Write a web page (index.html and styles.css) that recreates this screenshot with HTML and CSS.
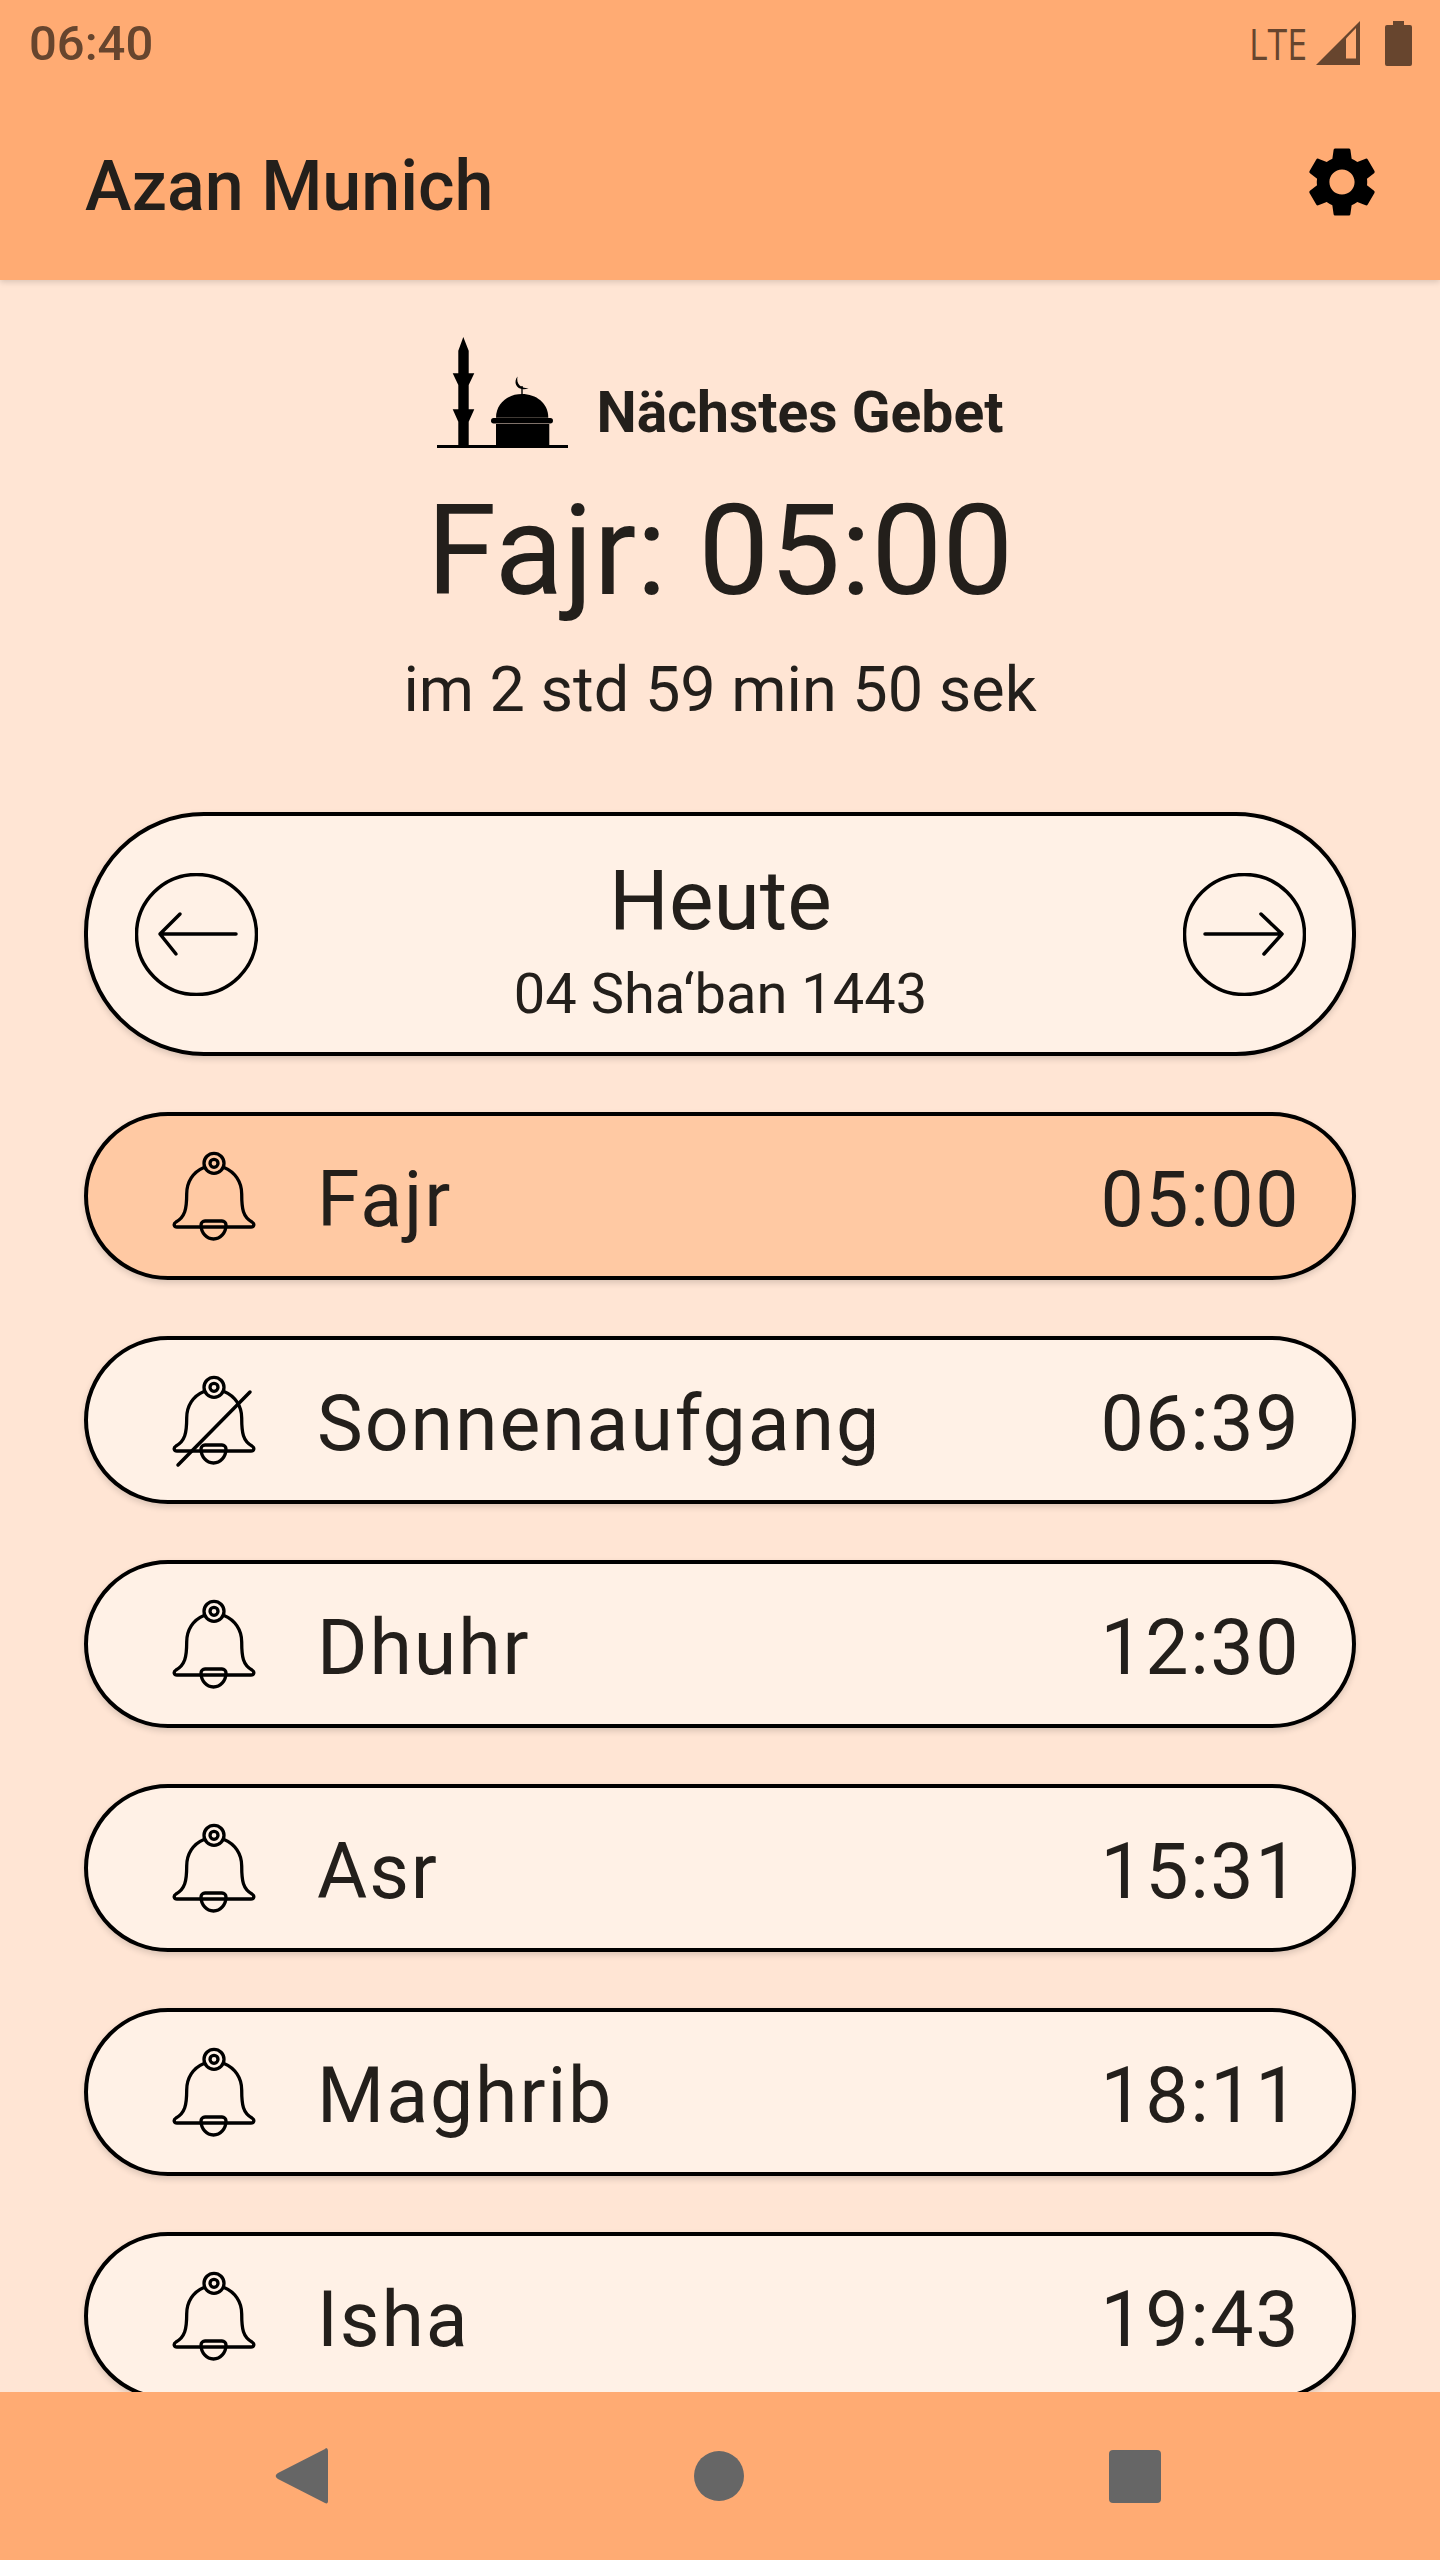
FILE: index.html
```html
<!DOCTYPE html>
<html lang="de">
<head>
    <meta charset="UTF-8">
    <meta name="viewport" content="width=device-width, initial-scale=1.0">
    <title>Azan Munich</title>
    <link rel="stylesheet" href="styles.css">
</head>
<body>
    <svg class="defs" width="0" height="0">
        <symbol id="bell" viewBox="0 0 84 92">
            <circle cx="42" cy="12.3" r="10"/>
            <circle cx="42" cy="12.3" r="4"/>
            <path d="M32 16.5C21 21 14.7 31 14.7 43C14.7 58 13 66 4 71C1 73 2 76 5 76H79C82 76 83 73 80 71C71 66 69.7 58 69.7 43C69.7 31 63 21 52 16.5"/>
            <path d="M34 70H50a4 4 0 0 1 4 4a12.5 14 0 0 1-25 0a4 4 0 0 1 4-4z"/>
        </symbol>
    </svg>

    <div class="phone">
        <div class="status-bar">
            <span class="clock">06:40</span>
            <div class="status-icons">
                <span class="lte">LTE</span>
                <svg class="signal" viewBox="0 0 44 44">
                    <path class="solid" d="M44 0V44H0z"/>
                    <path class="hole" d="M30 17.5V37.500H40V7z"/>
                </svg>
                <svg class="battery" viewBox="0 0 27 45">
                    <path class="solid" d="M8 0H19V4H25a2 2 0 0 1 2 2V43a2 2 0 0 1-2 2H2a2 2 0 0 1-2-2V6a2 2 0 0 1 2-2H8z"/>
                </svg>
            </div>
        </div>

        <header class="app-bar">
            <h1>Azan Munich</h1>
            <svg class="settings" viewBox="0 0 24 24">
                <path d="M19.14,12.94c0.04-0.3,0.06-0.61,0.06-0.94c0-0.32-0.02-0.64-0.07-0.94l2.03-1.58c0.18-0.14,0.23-0.41,0.12-0.61l-1.92-3.32c-0.12-0.22-0.37-0.29-0.59-0.22l-2.39,0.96c-0.5-0.38-1.03-0.7-1.62-0.94L14.4,2.81c-0.04-0.24-0.24-0.41-0.48-0.41h-3.84c-0.24,0-0.43,0.17-0.47,0.41L9.25,5.35C8.66,5.59,8.12,5.92,7.63,6.29L5.24,5.33c-0.22-0.08-0.47,0-0.59,0.22L2.74,8.87C2.62,9.08,2.66,9.34,2.86,9.48l2.03,1.58C4.84,11.36,4.8,11.69,4.8,12s0.02,0.64,0.07,0.94l-2.03,1.58c-0.18,0.14-0.23,0.41-0.12,0.61l1.92,3.32c0.12,0.22,0.37,0.29,0.59,0.22l2.39-0.96c0.5,0.38,1.03,0.7,1.62,0.94l0.36,2.54c0.05,0.24,0.24,0.41,0.48,0.41h3.84c0.24,0,0.44-0.17,0.47-0.41l0.36-2.54c0.59-0.24,1.13-0.56,1.62-0.94l2.39,0.96c0.22,0.08,0.47,0,0.59-0.22l1.92-3.32c0.12-0.22,0.07-0.47-0.12-0.61L19.14,12.94z M12,15.6c-1.98,0-3.6-1.62-3.6-3.6s1.62-3.6,3.6-3.6s3.6,1.62,3.6,3.6S13.98,15.6,12,15.6z"/>
            </svg>
        </header>

        <main class="content">
            <section class="next-prayer">
                <div class="next-head">
                    <svg class="mosque" viewBox="0 0 131 111">
                        <rect x="0" y="108" width="131" height="3"/>
                        <path d="M26.300 0L31.700 13.700V36.300H37.300L31.700 48V72.300H37.300L31.700 84.700V108H21.300V84.700L15.700 72.300H21.300V48L15.700 36.300H21.300V13.700z"/>
                        <path d="M59 80.700C59 66 71 57 85 57C99 57 111.300 66 111.300 80.700z"/>
                        <rect x="54" y="81" width="62" height="5.500" rx="2.700"/>
                        <rect x="59" y="87" width="53.300" height="21"/>
                        <rect x="84.300" y="49" width="1.400" height="9"/>
                        <path d="M80.500 39.500C75.500 46 80 55 91.700 51.300C84 51.500 79 47 80.500 39.500z"/>
                    </svg>
                    <h2>Nächstes Gebet</h2>
                </div>
                <div class="next-time">Fajr: 05:00</div>
                <div class="next-left">im 2 std 59 min 50 sek</div>
            </section>

            <section class="day-card">
                <svg class="round-btn" viewBox="0 0 123 123">
                    <circle cx="61.500" cy="61.500" r="60"/>
                    <path d="M101 61H25M45 41L25 61L41 81"/>
                </svg>
                <div class="day-text">
                    <div class="day-name">Heute</div>
                    <div class="day-hijri">04 Sha‘ban 1443</div>
                </div>
                <svg class="round-btn" viewBox="0 0 123 123">
                    <circle cx="61.500" cy="61.500" r="60"/>
                    <path d="M22 61H99M78 41L99 61L81 81"/>
                </svg>
            </section>

            <section class="prayer-list">
                <div class="prayer-row active">
                    <svg class="bell"><use href="#bell"/></svg>
                    <span class="prayer-name">Fajr</span>
                    <span class="prayer-time">05:00</span>
                </div>
                <div class="prayer-row">
                    <svg class="bell" viewBox="0 0 84 92">
                        <use href="#bell" width="84" height="92"/>
                        <path class="slash" d="M6 90L78 17"/>
                    </svg>
                    <span class="prayer-name">Sonnenaufgang</span>
                    <span class="prayer-time">06:39</span>
                </div>
                <div class="prayer-row">
                    <svg class="bell"><use href="#bell"/></svg>
                    <span class="prayer-name">Dhuhr</span>
                    <span class="prayer-time">12:30</span>
                </div>
                <div class="prayer-row">
                    <svg class="bell"><use href="#bell"/></svg>
                    <span class="prayer-name">Asr</span>
                    <span class="prayer-time">15:31</span>
                </div>
                <div class="prayer-row">
                    <svg class="bell"><use href="#bell"/></svg>
                    <span class="prayer-name">Maghrib</span>
                    <span class="prayer-time">18:11</span>
                </div>
                <div class="prayer-row">
                    <svg class="bell"><use href="#bell"/></svg>
                    <span class="prayer-name">Isha</span>
                    <span class="prayer-time">19:43</span>
                </div>
            </section>
        </main>

        <nav class="nav-bar">
            <svg class="nav-icon" viewBox="0 0 56 56">
                <path d="M52 0C53 0 54 1 54 3V53C54 55 53 56 51 55L4 31C1 29 1 27 4 25L51 1z"/>
            </svg>
            <svg class="nav-icon" viewBox="0 0 56 56">
                <circle cx="28" cy="28" r="25"/>
            </svg>
            <svg class="nav-icon" viewBox="0 0 56 56">
                <rect x="2" y="2" width="52" height="53" rx="4"/>
            </svg>
        </nav>
    </div>
</body>
</html>
```

FILE: styles.css
```css
* {
    box-sizing: border-box;
}
body {
    margin: 0;
    font-family: Roboto, "Noto Sans", sans-serif;
    color: #231f1b;
    background-color: #ffe5d4;
}
h1, h2 {
    margin: 0;
}
.defs {
    position: absolute;
}
.phone {
    width: 1440px;
    height: 2560px;
    display: flex;
    flex-direction: column;
    overflow: hidden;
}

/* status bar */
.status-bar {
    height: 84px;
    flex: none;
    display: flex;
    align-items: center;
    justify-content: space-between;
    padding: 2px 28px 0 29px;
    background-color: #ffab73;
    color: #67452e;
    position: relative;
    z-index: 1;
}
.clock {
    font-size: 49px;
    font-weight: 500;
}
.status-icons {
    display: flex;
    align-items: center;
}
.lte {
    display: inline-block;
    font-size: 43px;
    font-family: "Open Sans", sans-serif;
    margin-right: 9px;
    transform: scaleX(0.83);
    transform-origin: right center;
}
.signal {
    width: 44px;
    height: 44px;
    margin-right: 25px;
}
.battery {
    width: 27px;
    height: 45px;
}
.solid {
    fill: #67452e;
}
.hole {
    fill: #ffab73;
}

/* app bar */
.app-bar {
    height: 196px;
    flex: none;
    display: flex;
    align-items: center;
    justify-content: space-between;
    padding: 0 56px 0 85px;
    background-color: #ffab73;
    box-shadow: 0 2px 6px rgba(0,0,0,0.15);
    position: relative;
}
.app-bar h1 {
    font-size: 70px;
    font-weight: 500;
    padding-top: 8px;
}
.settings {
    width: 84px;
    height: 84px;
}

.content {
    flex: 1;
    min-height: 0;
    overflow: hidden;
    padding: 57px 84px 0;
}

/* next prayer block */
.next-prayer {
    display: flex;
    flex-direction: column;
    align-items: center;
}
.next-head {
    display: flex;
    align-items: flex-end;
    gap: 29px;
    height: 111px;
}
.mosque {
    width: 131px;
    height: 111px;
}
.next-head h2 {
    font-size: 57px;
    font-weight: 700;
    line-height: 66px;
    margin-bottom: 2px;
}
.next-time {
    font-size: 126.5px;
    line-height: 148px;
    margin-top: 29px;
}
.next-left {
    font-size: 63px;
    line-height: 84px;
    margin-top: 23px;
}

/* day switcher */
.day-card {
    height: 244px;
    margin-top: 80px;
    display: flex;
    align-items: center;
    justify-content: space-between;
    padding: 0 46px 0 47px;
    background-color: #fff1e6;
    border: 4px solid #000;
    border-radius: 120px;
    box-shadow: 0 3px 6px rgba(0,0,0,0.15);
}
.round-btn {
    width: 123px;
    height: 123px;
}
.round-btn circle,
.round-btn path {
    fill: none;
    stroke: #000;
    stroke-width: 3.5;
    stroke-linecap: round;
    stroke-linejoin: round;
}
.day-text {
    text-align: center;
    padding-top: 9px;
}
.day-name {
    font-size: 84px;
    line-height: 100px;
}
.day-hijri {
    font-size: 56px;
    line-height: 66px;
    margin-top: 10px;
}

/* prayer rows */
.prayer-list {
    margin-top: 56px;
    display: flex;
    flex-direction: column;
    gap: 56px;
}
.prayer-row {
    height: 168px;
    flex: none;
    display: flex;
    align-items: center;
    padding: 2px 52px 0 84px;
    background-color: #fff1e6;
    border: 4px solid #000;
    border-radius: 84px;
    box-shadow: 0 3px 6px rgba(0,0,0,0.15);
}
.prayer-row.active {
    background-color: #ffc9a3;
}
.bell {
    width: 84px;
    height: 92px;
    flex: none;
    fill: none;
    stroke: #000;
    stroke-width: 3.3;
    overflow: visible;
}
.slash {
    stroke-linecap: round;
    stroke-width: 3.5;
}
.prayer-name {
    flex: 1;
    margin: 6px 0 0 61px;
    font-size: 77px;
    letter-spacing: 0.025em;
}
.prayer-time {
    margin-top: 6px;
    font-size: 77px;
    letter-spacing: 0.02em;
}

/* system nav */
.nav-bar {
    height: 168px;
    flex: none;
    display: flex;
    align-items: center;
    justify-content: space-between;
    padding: 0 277px 0 274px;
    background-color: #ffab73;
    position: relative;
}
.nav-icon {
    width: 56px;
    height: 56px;
    fill: #666;
}
```
